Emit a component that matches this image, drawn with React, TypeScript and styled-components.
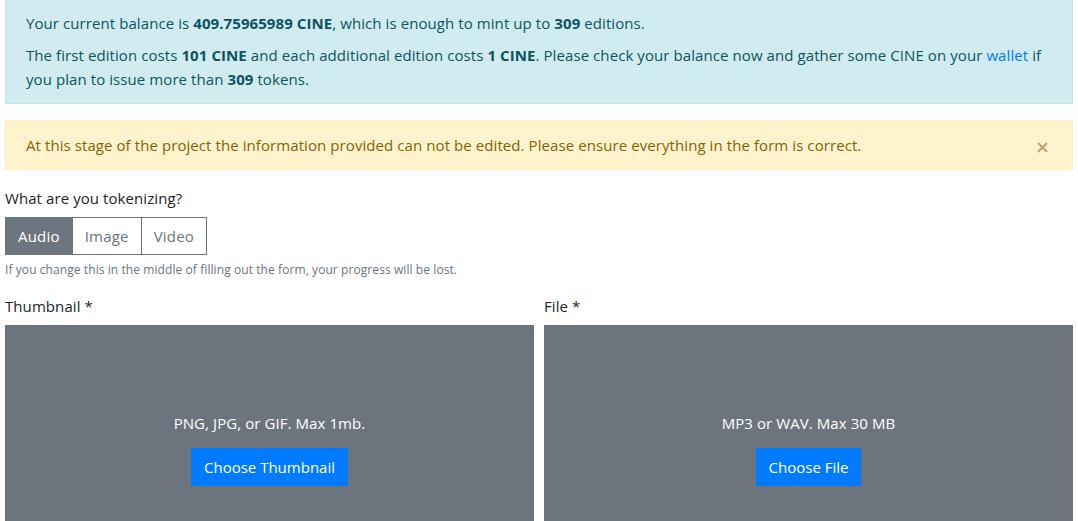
import React from 'react';
import styled, {createGlobalStyle} from "styled-components";

const GlobalStyle = createGlobalStyle`
  * { box-sizing: border-box; }
  body {
    margin: 0;
    font-family: "Open Sans", "Noto Sans", sans-serif;
    font-size: 15px;
    line-height: 24px;
    letter-spacing: 0.08px;
    color: #212529;
    background: #fff;
    overflow: hidden;
  }
`

type AlertTone = 'info' | 'warning'

const tones = {
    info: {bg: '#d1ecf1', border: '#bee5eb', color: '#0c5460'},
    warning: {bg: '#fff3cd', border: '#ffeeba', color: '#856404'},
}

export default function App() {
    const [kind, setKind] = React.useState('Audio')
    return (
        <Page>
            <GlobalStyle/>
            <Alert $tone="info" $top>
                <AlertLine>
                    Your current balance is <b>409.75965989 CINE</b>, which is enough to mint up to <b>309</b> editions.
                </AlertLine>
                <AlertLine>
                    The first edition costs <b>101 CINE</b> and each additional edition costs <b>1 CINE</b>. Please
                    check your balance now and gather some CINE on your <Link href="#">wallet</Link> if you plan to
                    issue more than <b>309</b> tokens.
                </AlertLine>
            </Alert>
            <Alert $tone="warning" $dismissible>
                <AlertLine>
                    At this stage of the project the information provided can not be edited. Please ensure everything
                    in the form is correct.
                </AlertLine>
                <Close aria-label="Close">
                    <svg width="11" height="11" viewBox="0 0 11 11">
                        <path d="M1 1L10 10M10 1L1 10" stroke="currentColor" strokeWidth="2.2" strokeLinecap="butt"/>
                    </svg>
                </Close>
            </Alert>

            <Label>What are you tokenizing?</Label>
            <ButtonGroup>
                {['Audio', 'Image', 'Video'].map(k => (
                    <Toggle key={k} $active={kind === k} onClick={() => setKind(k)}>{k}</Toggle>
                ))}
            </ButtonGroup>
            <Hint>If you change this in the middle of filling out the form, your progress will be lost.</Hint>

            <Columns>
                <Field>
                    <Label>Thumbnail *</Label>
                    <Drop>
                        <DropText>PNG, JPG, or GIF. Max 1mb.</DropText>
                        <Primary>Choose Thumbnail</Primary>
                    </Drop>
                </Field>
                <Field>
                    <Label>File *</Label>
                    <Drop>
                        <DropText>MP3 or WAV. Max 30 MB</DropText>
                        <Primary>Choose File</Primary>
                    </Drop>
                </Field>
            </Columns>
        </Page>
    );
};

const Page = styled.div`
  padding: 0 5px;
`

const Alert = styled.div<{ $tone: AlertTone, $top?: boolean, $dismissible?: boolean }>`
  position: relative;
  margin-top: ${p => p.$top ? '-2px' : '0'};
  margin-bottom: 16px;
  padding: 12px ${p => p.$dismissible ? '60px' : '20px'} 12px 20px;
  background: ${p => tones[p.$tone].bg};
  border: 1px solid ${p => tones[p.$tone].border};
  color: ${p => tones[p.$tone].color};
  b {
    font-weight: 700;
  }
`

const AlertLine = styled.p`
  margin: 0;
  & + & {
    margin-top: 8px;
  }
`

const Link = styled.a`
  color: #007bff;
  text-decoration: none;
`

const Close = styled.button`
  position: absolute;
  top: 21px;
  right: 24px;
  display: flex;
  padding: 0;
  border: 0;
  background: transparent;
  color: #bba872;
  cursor: pointer;
`

const Label = styled.div`
  margin-bottom: 7px;
`

const ButtonGroup = styled.div`
  display: inline-flex;
`

const Toggle = styled.button<{ $active: boolean }>`
  height: 38px;
  padding: 0 12px;
  font-family: inherit;
  font-size: 15px;
  letter-spacing: 0.2px;
  border: 1px solid #6c757d;
  background: ${p => p.$active ? '#6c757d' : '#fff'};
  color: ${p => p.$active ? '#fff' : '#6c757d'};
  cursor: pointer;
  & + & {
    margin-left: -1px;
  }
`

const Hint = styled.div`
  margin-top: 6px;
  font-size: 12px;
  line-height: 18px;
  color: #6c757d;
`

const Columns = styled.div`
  display: grid;
  grid-template-columns: 1fr 1fr;
  gap: 10px;
  margin-top: 15px;
`

const Field = styled.div``

const Drop = styled.div`
  height: 248px;
  background: #6c757d;
  color: #fff;
  display: flex;
  flex-direction: column;
  align-items: center;
  padding-top: 86px;
`

const DropText = styled.div`
  margin-bottom: 13px;
`

const Primary = styled.button`
  height: 38px;
  padding: 0 12px;
  font-family: inherit;
  font-size: 15px;
  border: 1px solid #007bff;
  background: #007bff;
  color: #fff;
  cursor: pointer;
`
